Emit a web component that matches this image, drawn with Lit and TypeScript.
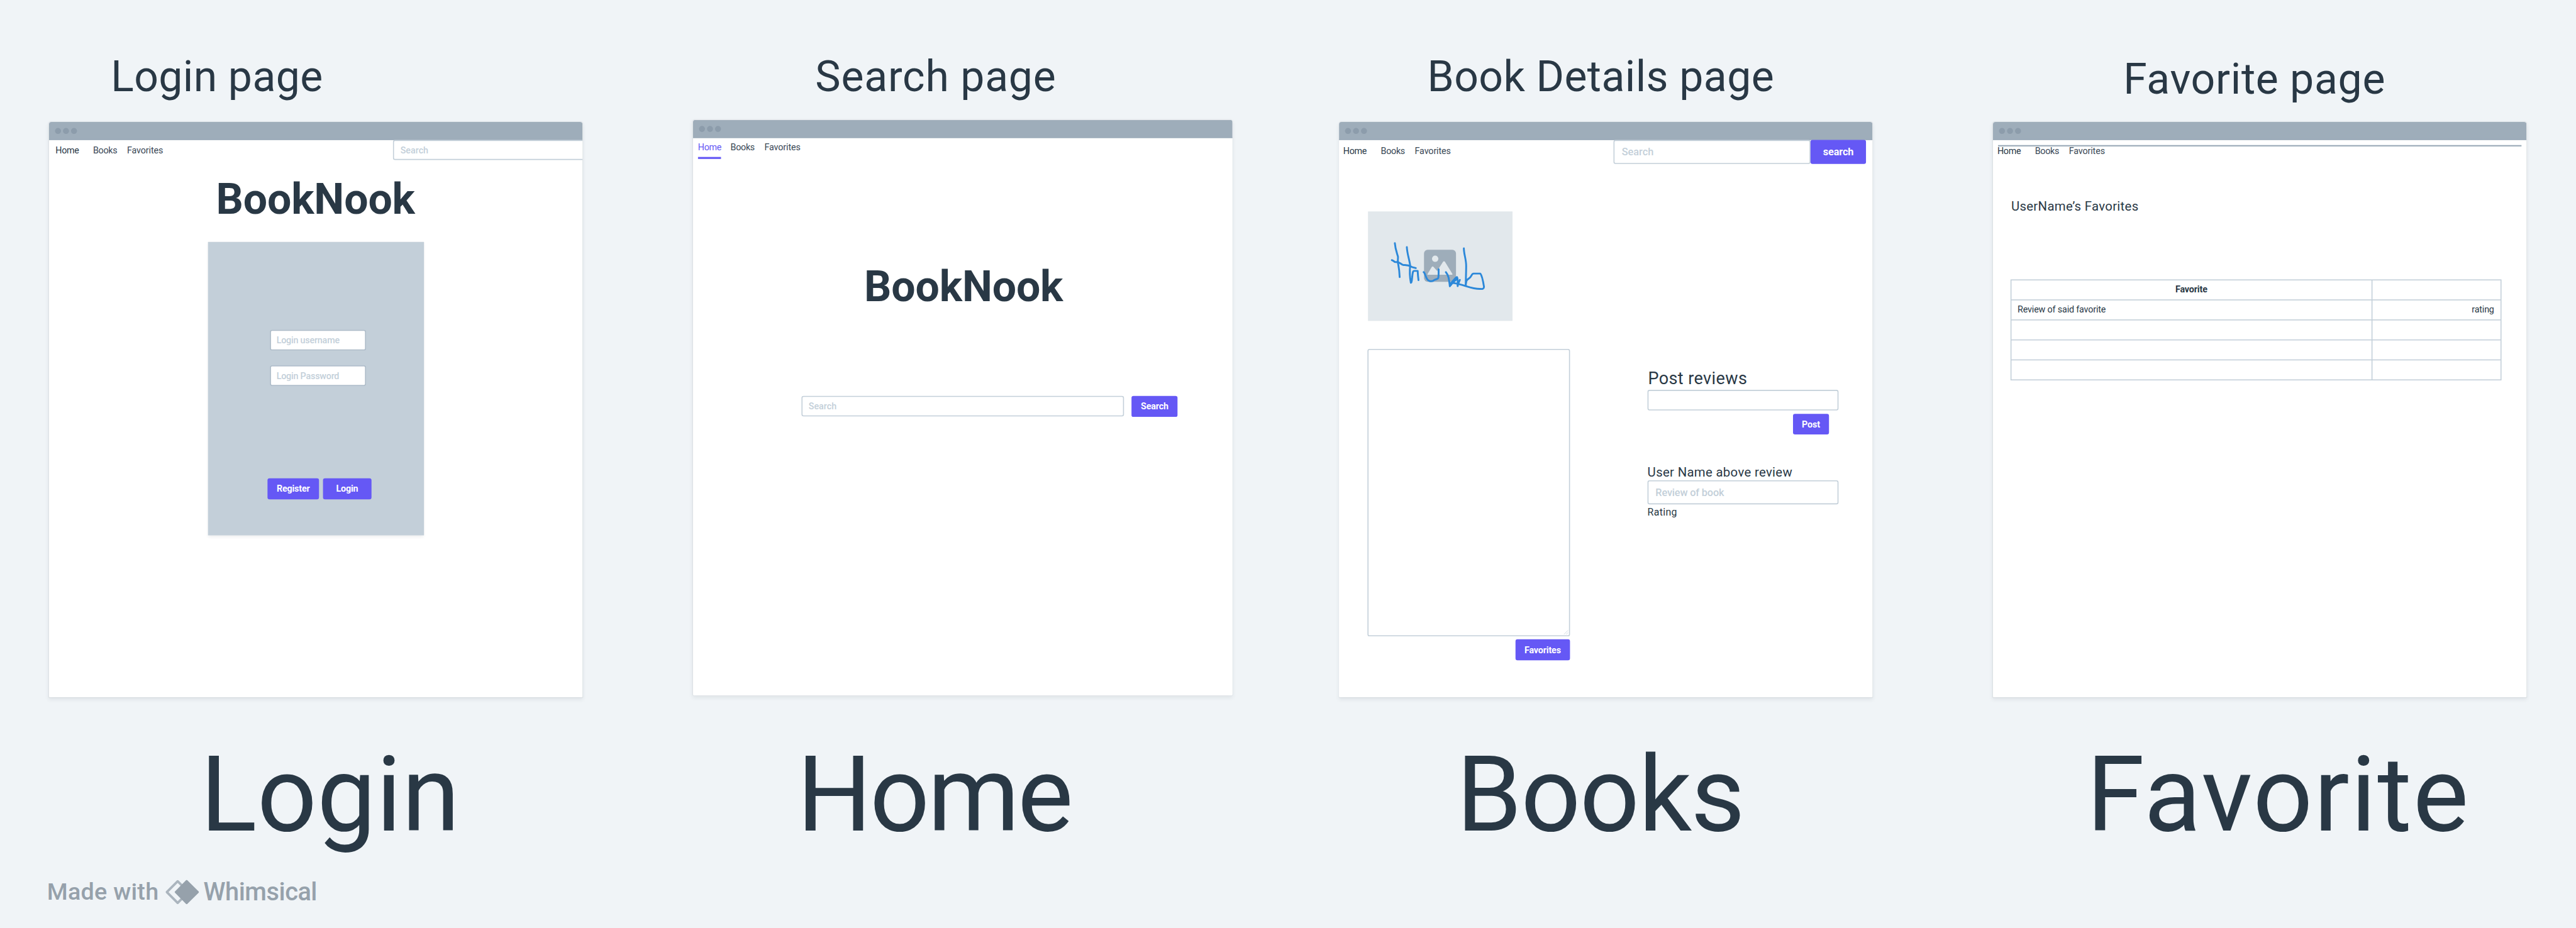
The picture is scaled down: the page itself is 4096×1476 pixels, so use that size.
import { LitElement, html, css, svg } from "lit";
import { customElement, property } from "lit/decorators.js";

const base = css`
  * {
    box-sizing: border-box;
    margin: 0;
    padding: 0;
  }
`;

/** Browser window chrome with three dots and a white body. */
@customElement("browser-frame")
export class BrowserFrame extends LitElement {
  static styles = [
    base,
    css`
      :host {
        display: block;
        height: 1151px;
        border-radius: 5px 5px 2px 2px;
        background: #ffffff;
        overflow: hidden;
        box-shadow: 0 0 2px rgba(41, 56, 69, 0.07), 0 4px 8px rgba(41, 56, 69, 0.08);
      }
      .bar {
        height: 36px;
        display: flex;
        align-items: center;
        gap: 4px;
        padding-left: 12px;
        background: #9eadba;
        border-bottom: 1px solid #94a4b2;
      }
      .dot {
        width: 12px;
        height: 12px;
        border-radius: 50%;
        background: #8c9cab;
      }
    `,
  ];
  render() {
    return html`
      <div class="bar">
        <span class="dot"></span><span class="dot"></span><span class="dot"></span>
      </div>
      <slot></slot>
    `;
  }
}

@customElement("nav-links")
export class NavLinks extends LitElement {
  @property() active = "";
  static styles = [
    base,
    css`
      :host {
        display: block;
      }
      .links {
        display: grid;
        grid-template-columns: var(--home-col, 75.2px) 67.8px max-content;
        line-height: inherit;
        font-size: 18px;
        font-weight: 400;
        letter-spacing: -0.4px;
        color: #3a4855;
        white-space: nowrap;
      }
      .first {
        color: #293845;
      }
      .last {
        letter-spacing: -0.15px;
      }
      .active {
        justify-self: start;
        width: 46px;
        height: 42px;
        color: #6558f5;
        border-bottom: 4px solid #6558f5;
      }
    `,
  ];
  render() {
    return html`<nav class="links">
      <a class="first ${this.active === "Home" ? "active" : ""}">Home</a>
      <a>Books</a>
      <a class="last">Favorites</a>
    </nav>`;
  }
}

const thumbnail = svg`
  <rect x="384" y="269" width="192" height="192" rx="22" fill="#9eadba" />
  <circle cx="451" cy="323" r="19" fill="#e2e8ec" />
  <path d="M408 419 Q403 419 406 413 L431 372 Q436 365 441 372 L463 396 L498 342 Q504 334 510 342 L554 413 Q557 419 551 419 Z" fill="#e2e8ec" />
  <g fill="none" stroke="#2c88d9" stroke-width="11" stroke-linecap="round" stroke-linejoin="round">
    <path d="M209 229 C212 265 219 280 228 311 C228 335 224 340 230 360 C235 385 237 410 238 433" />
    <path d="M191 331 C203 333 203 344 215 343 C240 340 243 357 262 361 C285 359 300 366 313 373 L335 379" />
    <path d="M281 253 C283 295 296 325 301 364 C297 400 298 430 305 467 C312 467 311 450 313 435 C316 405 317 396 325 396 L346 396 C347 415 348 430 351 451" />
    <path d="M382 403 C393 410 394 448 414 455 C424 459 438 458 446 450 C454 446 467 447 470 436 C473 418 471 404 472 386" />
    <path d="M515 403 C533 424 534 450 539 487 C546 482 548 474 554 459 C566 449 572 437 582 433 C590 450 584 470 586 487 C588 466 596 462 599 450" />
    <path d="M539 487 L556 467 L584 442" />
    <path d="M623 260 C624 300 637 325 637 366 C637 405 635 445 634 485 C638 460 636 451 650 444 C674 432 665 413 682 412 L722 412 C734 426 739 460 744 492 C743 506 733 505 720 504 C680 505 640 487 600 477 C585 472 567 470 552 467 L546 468" />
  </g>
`;

@customElement("app-root")
export class AppRoot extends LitElement {
  static styles = [
    base,
    css`
      :host {
        display: block;
        width: 4096px;
        height: 1476px;
        overflow: hidden;
        background: #f0f4f7;
        font-family: Roboto, "Open Sans", sans-serif;
        color: #293845;
      }
      .canvas {
        width: 5152px;
        height: 1857px;
        transform: scale(0.795031);
        transform-origin: 0 0;
        display: flex;
        flex-direction: column;
        white-space: nowrap;
      }
      .board {
        display: flex;
        height: 1751px;
        padding-left: 98px;
      }
      .col {
        width: 1067px;
        flex: none;
      }
      .login {
        margin-right: 221.2px;
      }
      .search {
        width: 1079px;
        margin-right: 212.8px;
      }
      .books {
        margin-right: 241px;
      }
      .title {
        margin: 104px 0 40px;
        font-size: 85.4px;
        line-height: 100px;
        font-weight: 400;
      }
      .login .title {
        padding-left: 123.7px;
        letter-spacing: 0.5px;
      }
      .search .title {
        padding-left: 244.3px;
        letter-spacing: 1px;
        margin-bottom: 36px;
      }
      .books .title {
        padding-left: 176.7px;
        letter-spacing: 0.5px;
      }
      .favorite .title {
        padding-left: 260.6px;
        letter-spacing: 0.9px;
        margin-top: 108px;
        margin-bottom: 36px;
      }
      .label {
        margin-top: 73.6px;
        font-size: 210px;
        line-height: 240px;
      }
      .login .label {
        padding-left: 302.6px;
        letter-spacing: 0.3px;
      }
      .search .label {
        margin-top: 77.6px;
        padding-left: 207.8px;
        letter-spacing: -4.2px;
      }
      .books .label {
        padding-left: 234.8px;
        letter-spacing: -2px;
      }
      .favorite .label {
        padding-left: 187px;
        letter-spacing: 2.4px;
      }

      .head {
        display: flex;
        align-items: flex-start;
      }
      .field {
        height: 41.2px;
        display: flex;
        align-items: center;
        padding-left: 12.5px;
        background: #ffffff;
        border: 2px solid #c3cfd9;
        border-radius: 4px;
        color: #c3cfd9;
        font-size: 18px;
        font-weight: 500;
        flex: none;
      }
      .btn {
        height: 41.6px;
        display: flex;
        align-items: center;
        justify-content: center;
        flex: none;
        border-radius: 4px;
        background: #6558f5;
        color: #ffffff;
        font-size: 18px;
        font-weight: 700;
        letter-spacing: -0.2px;
      }
      .brand {
        font-size: 85.5px;
        line-height: 100px;
        font-weight: 700;
        letter-spacing: -0.2px;
        text-align: center;
      }

      .login .head {
        height: 40px;
      }
      .login .nav {
        width: 688.3px;
        flex: none;
        padding-left: 13px;
        line-height: 41.3px;
      }
      .login .head .field {
        width: 480px;
        height: 40px;
      }
      .login .brand {
        margin-top: 28.8px;
        padding-right: 1px;
      }
      .panel {
        width: 432px;
        height: 586.5px;
        margin: 35.5px 0 0 318px;
        padding: 176px 0 0 119px;
        background: #c3cfd9;
        box-shadow: 0 0 2px rgba(41, 56, 69, 0.1), 0 3px 6px rgba(41, 56, 69, 0.08);
      }
      .panel .field {
        width: 192px;
        margin: 0 0 29.4px 5px;
        padding-left: 11px;
        border-color: #aebcc9;
        letter-spacing: -0.25px;
      }
      .actions {
        display: flex;
        gap: 7.5px;
        margin-top: 185px;
      }
      .register {
        width: 103px;
      }
      .signin {
        width: 97.5px;
      }

      .search .nav {
        padding-left: 9.7px;
        height: 42px;
        line-height: 35px;
        --home-col: 65.2px;
      }
      .search .brand {
        margin-top: 206.3px;
        margin-bottom: -0.7px;
        padding-left: 3px;
      }
      .query {
        display: flex;
        gap: 15.3px;
        margin: 168.4px 0 0 216.6px;
      }
      .query .field {
        width: 645px;
      }
      .query .btn {
        width: 92.4px;
      }

      .books .nav {
        width: 549px;
        flex: none;
        padding-left: 8.5px;
        line-height: 43.4px;
      }
      .books .head .field {
        width: 394px;
        height: 47.7px;
        padding-left: 14.5px;
        font-size: 20.5px;
      }
      .books .head .btn {
        width: 111.3px;
        height: 47.7px;
        font-size: 20.5px;
      }
      .thumb {
        display: block;
        width: 289px;
        height: 218.7px;
        margin: 95.4px 0 56px 58px;
        background: #e2e8ec;
      }
      .details {
        display: flex;
        align-items: flex-start;
        gap: 155px;
        padding-left: 57px;
      }
      .summary {
        width: 405px;
        display: flex;
        flex-direction: column;
        align-items: flex-end;
        gap: 6.8px;
      }
      .area {
        width: 405px;
        height: 574.8px;
        display: flex;
        align-items: flex-end;
        justify-content: flex-end;
        padding: 1px;
        border: 2px solid #c3cfd9;
        border-radius: 4px;
      }
      .grip {
        width: 10px;
        height: 10px;
      }
      .summary .btn {
        width: 109.3px;
      }
      .reviews {
        width: 382px;
        padding-top: 39.6px;
        display: flex;
        flex-direction: column;
      }
      .reviews h2 {
        font-size: 34px;
        line-height: 40px;
        font-weight: 400;
        letter-spacing: 0.5px;
        margin: 0 0 2.3px 1px;
      }
      .reviews .btn {
        width: 72.2px;
        align-self: flex-end;
        margin: 7px 19.1px 60.4px 0;
      }
      .reviews h3,
      .heading {
        font-size: 25.6px;
        line-height: 30px;
        font-weight: 400;
        letter-spacing: 0.4px;
      }
      .reviews .tall {
        height: 48.5px;
        margin-top: 1px;
        padding-left: 14px;
        font-size: 20.5px;
        letter-spacing: -0.2px;
      }
      .rating {
        margin-top: 3px;
        font-size: 20px;
        line-height: 26px;
        letter-spacing: 0.4px;
      }

      .rule {
        height: 3px;
        width: 1047px;
        margin: 10px 0 0 10px;
        background: linear-gradient(#c3cfd9 0 33%, #9eadba 33%);
      }
      .favorite .nav {
        padding-left: 8.8px;
        height: 18.7px;
        line-height: 17.2px;
      }
      .heading {
        margin: 85.5px 0 131.4px 36.4px;
      }
      .table {
        display: grid;
        grid-template-columns: 720px 256px;
        grid-auto-rows: 38px;
        gap: 2px;
        width: 982px;
        margin-left: 34.7px;
        padding: 2px;
        background: #c3cfd9;
        font-size: 18px;
        line-height: 36px;
        letter-spacing: -0.2px;
      }
      .cell {
        background: #ffffff;
        padding: 0 12.5px;
      }
      .th {
        font-weight: 700;
        text-align: center;
      }
      .right {
        text-align: right;
      }

      .credit {
        display: flex;
        align-items: center;
        height: 66px;
        padding-left: 94px;
        font-size: 47.5px;
        line-height: 66px;
        font-weight: 500;
        letter-spacing: 0.3px;
        color: #96a1ab;
      }
      .mark {
        width: 67px;
        height: 49px;
        flex: none;
        margin-right: 9px;
      }
      .made {
        width: 237px;
        flex: none;
      }
      .word {
        font-size: 50px;
        letter-spacing: -0.6px;
      }
    `,
  ];

  render() {
    return html`
      <main class="canvas">
        <div class="board">
          <section class="col login">
            <h2 class="title">Login page</h2>
            <browser-frame>
              <div class="head">
                <nav-links class="nav"></nav-links>
                <div class="field">Search</div>
              </div>
              <h1 class="brand">BookNook</h1>
              <div class="panel">
                <div class="field">Login username</div>
                <div class="field">Login Password</div>
                <div class="actions">
                  <div class="btn register">Register</div>
                  <div class="btn signin">Login</div>
                </div>
              </div>
            </browser-frame>
            <div class="label">Login</div>
          </section>

          <section class="col search">
            <h2 class="title">Search page</h2>
            <browser-frame>
              <nav-links class="nav" active="Home"></nav-links>
              <h1 class="brand">BookNook</h1>
              <div class="query">
                <div class="field">Search</div>
                <div class="btn">Search</div>
              </div>
            </browser-frame>
            <div class="label">Home</div>
          </section>

          <section class="col books">
            <h2 class="title">Book Details page</h2>
            <browser-frame>
              <div class="head">
                <nav-links class="nav"></nav-links>
                <div class="field">Search</div>
                <div class="btn">search</div>
              </div>
              <svg class="thumb" viewBox="48 39 867 656">${thumbnail}</svg>
              <div class="details">
                <div class="summary">
                  <div class="area">
                    <svg class="grip" viewBox="0 0 10 10" stroke="#c3cfd9" stroke-width="1" fill="none">
                      <path d="M1 9 L9 1 M5.5 9 L9 5.5" />
                    </svg>
                  </div>
                  <div class="btn">Favorites</div>
                </div>
                <div class="reviews">
                  <h2>Post reviews</h2>
                  <div class="field"></div>
                  <div class="btn">Post</div>
                  <h3>User Name above review</h3>
                  <div class="field tall">Review of book</div>
                  <div class="rating">Rating</div>
                </div>
              </div>
            </browser-frame>
            <div class="label">Books</div>
          </section>

          <section class="col favorite">
            <h2 class="title">Favorite page</h2>
            <browser-frame>
              <div class="rule"></div>
              <nav-links class="nav"></nav-links>
              <h3 class="heading">UserName’s Favorites</h3>
              <div class="table">
                <div class="cell th">Favorite</div>
                <div class="cell"></div>
                <div class="cell">Review of said favorite</div>
                <div class="cell right">rating</div>
                ${[0, 1, 2].map(() => html`<div class="cell"></div><div class="cell"></div>`)}
              </div>
            </browser-frame>
            <div class="label">Favorite</div>
          </section>
        </div>

        <footer class="credit">
          <span class="made">Made with</span>
          <svg class="mark" viewBox="33 41 201 147">
            <path d="M106 50 L171 115 L106 180 L41 115 Z" fill="none" stroke="#abb5be" stroke-width="14" stroke-linejoin="round" />
            <path d="M160 49 L227 115 L160 181 L95 115 Z" fill="#96a1ab" stroke="#96a1ab" stroke-width="13" stroke-linejoin="round" />
          </svg>
          <span class="word">Whimsical</span>
        </footer>
      </main>
    `;
  }
}
